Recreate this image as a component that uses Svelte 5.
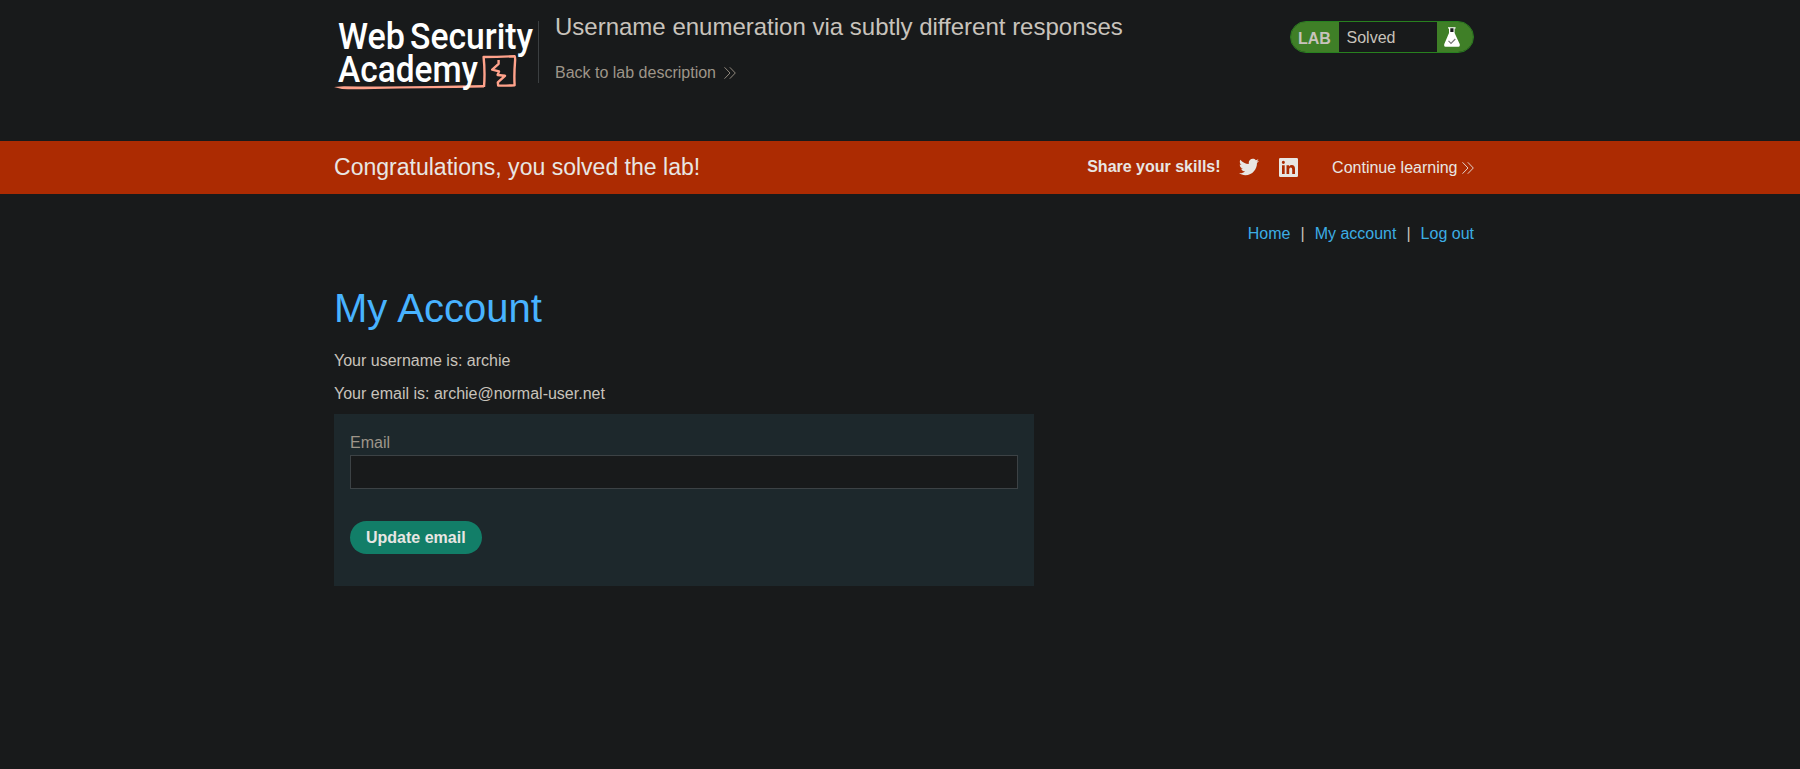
<script>
  const links = ['Home', 'My account', 'Log out'];
  let email = $state('');
</script>

{#snippet chevrons()}
  <svg class="chevrons" viewBox="0 0 12 12" width="12" height="12" aria-hidden="true">
    <path d="M0.5 0.3 L6 6 L0.5 11.7 M5.8 0.3 L11.3 6 L5.8 11.7" />
  </svg>
{/snippet}

<div class="page">
  <header class="container header">
    <svg class="logo" viewBox="0 0 204 82" width="204" height="82" role="img" aria-label="Web Security Academy">
      <path class="ink" d="M150 77 Q151.2 62 149.6 47 Q165 46.8 180.6 46.2 Q181.4 47 181 52 Q180 64 180.6 75.2 Q172 75.8 164.2 75.6 L163.8 72.4 L171 65.8 L163.6 65 L165 61.3 L158.2 59.6 L164.6 53.8 V50" />
      <path class="tail" d="M0 77 L10 76.2 Q24 76.4 40 76.4 Q90 76.6 150 75 V77.6 Q90 78.4 40 79 Q18 79.6 8 79 Z" />
      <text x="4" y="39.2" textLength="67" lengthAdjust="spacingAndGlyphs">Web</text>
      <text x="76" y="39.2" textLength="123" lengthAdjust="spacingAndGlyphs">Security</text>
      <text x="4" y="71.8" textLength="140" lengthAdjust="spacingAndGlyphs">Academy</text>
    </svg>
    <div class="heading">
      <h2>Username enumeration via subtly different responses</h2>
      <a class="back" href="#lab">Back to lab description {@render chevrons()}</a>
    </div>
    <div class="status">
      <span class="tag">LAB</span>
      <span class="state">Solved</span>
      <span class="flask">
        <svg viewBox="0 0 18 22" width="18" height="22" aria-hidden="true">
          <path fill="#fff" d="M5 1.2 H12.6 V2.6 H11.6 V7 L16.8 18.2 Q17.2 20.7 15.5 20.8 H2.5 Q0.6 20.7 1.2 18.2 L6 7 V2.6 H5 Z" />
          <path fill="#181a1b" d="M7.3 2.2 H10.5 V6 H7.3 Z" />
          <path fill="none" stroke="#777" stroke-width="1.2" d="M5.5 14.8 L8 17.3 L12.3 13" />
        </svg>
      </span>
    </div>
  </header>

  <section class="banner">
    <div class="container banner-row">
      <h4>Congratulations, you solved the lab!</h4>
      <div class="share">
        <strong>Share your skills!</strong>
        <svg class="twitter" viewBox="0 0 24 24" width="20" height="20" aria-hidden="true">
          <path d="M23.954 4.569c-.885.389-1.83.654-2.825.775 1.014-.611 1.794-1.574 2.163-2.723-.951.555-2.005.959-3.127 1.184-.896-.959-2.173-1.559-3.591-1.559-2.717 0-4.92 2.203-4.92 4.917 0 .39.045.765.127 1.124C7.691 8.094 4.066 6.13 1.64 3.161c-.427.722-.666 1.561-.666 2.475 0 1.71.87 3.213 2.188 4.096-.807-.026-1.566-.248-2.228-.616v.061c0 2.385 1.693 4.374 3.946 4.827-.413.111-.849.171-1.296.171-.314 0-.615-.03-.916-.086.631 1.953 2.445 3.377 4.604 3.417-1.68 1.319-3.809 2.105-6.102 2.105-.39 0-.779-.023-1.17-.067 2.189 1.394 4.768 2.209 7.557 2.209 9.054 0 13.999-7.496 13.999-13.986 0-.209 0-.42-.015-.63.961-.689 1.8-1.56 2.46-2.548l-.047-.02z" />
        </svg>
        <svg class="linkedin" viewBox="0 0 19 19" width="19" height="19" aria-hidden="true">
          <path fill-rule="evenodd" d="M1.3 0 H17.7 Q19 0 19 1.3 V17.7 Q19 19 17.7 19 H1.3 Q0 19 0 17.7 V1.3 Q0 0 1.3 0 Z M3 7.2 V16 H5.7 V7.2 Z M4.35 2.8 A1.55 1.55 0 1 0 4.35 5.9 A1.55 1.55 0 1 0 4.35 2.8 Z M7.5 7.2 V16 H10.2 V11.5 Q10.3 9.4 11.8 9.4 Q13.2 9.4 13.2 11.5 V16 H16 V11 Q16 7 12.8 7 Q11 7 10.1 8.4 V7.2 Z" />
        </svg>
        <a class="continue" href="#learn">Continue learning {@render chevrons()}</a>
      </div>
    </div>
  </section>

  <main class="container">
    <nav>
      {#each links as link, i}
        {#if i > 0}<span>|</span>{/if}
        <a href="#top">{link}</a>
      {/each}
    </nav>
    <h1>My Account</h1>
    <p>Your username is: archie</p>
    <p>Your email is: archie@normal-user.net</p>
    <form onsubmit={(e) => e.preventDefault()}>
      <label for="email">Email</label>
      <input id="email" type="email" bind:value={email} />
      <button type="submit">Update email</button>
    </form>
  </main>
</div>

<style>
  :global(body) {
    margin: 0;
    background: #181a1b;
  }
  .page {
    box-sizing: border-box;
    min-height: 769px;
    padding-left: 0;
    background: #181a1b;
    color: #c8c3bc;
    font: 16px/20px "Liberation Sans", Arial, sans-serif;
  }
  h1, h2, h4, p {
    margin: 0;
    font-weight: 400;
  }
  a {
    color: inherit;
    text-decoration: none;
  }
  .container {
    box-sizing: border-box;
    width: 1148px;
    margin: 0 auto;
    padding-left: 8px;
  }
  .chevrons {
    fill: none;
    stroke: currentColor;
    stroke-width: 0.9;
  }
  .header {
    display: flex;
    height: 141px;
    align-items: flex-start;
  }
  .logo {
    margin-top: 10px;
    overflow: visible;
  }
  .logo text {
    fill: #fff;
    font: 500 37px Roboto, sans-serif;
  }
  .ink {
    fill: none;
    stroke: #ffa28b;
    stroke-width: 2.4;
    stroke-linejoin: round;
  }
  .tail {
    fill: #ffa28b;
  }
  .heading {
    flex: 1;
    height: 62px;
    margin-top: 21px;
    padding-left: 16px;
    border-left: 1px solid #3b3f41;
  }
  h2 {
    margin-top: -9px;
    font-size: 24px;
    line-height: 30px;
  }
  .back {
    display: flex;
    align-items: center;
    gap: 8px;
    margin-top: 21px;
    color: #9e9589;
  }
  .status {
    display: flex;
    box-sizing: border-box;
    width: 184px;
    height: 32px;
    margin-top: 21px;
    border: 1px solid #28811f;
    border-radius: 16px;
    overflow: hidden;
    line-height: 33px;
  }
  .tag {
    box-sizing: border-box;
    width: 48px;
    padding-left: 7px;
    background: #3f7f27;
    font-weight: 700;
  }
  .state {
    flex: 1;
    padding-left: 7.5px;
    line-height: 31px;
  }
  .flask {
    width: 36px;
    background: #3f7f27;
  }
  .flask svg {
    display: block;
    margin: 4px 0 0 6px;
  }
  .banner {
    height: 53px;
    background: #ac2b02;
    color: #e8e6e3;
  }
  .banner-row {
    display: flex;
    height: 51px;
    align-items: center;
    justify-content: space-between;
  }
  h4 {
    font-size: 23.04px;
    line-height: 28px;
  }
  .share {
    display: flex;
    align-items: center;
    fill: #e8e6e3;
  }
  .twitter {
    margin: 1px 0 0 18.5px;
  }
  .linkedin {
    margin: 2px 0 0 20px;
  }
  .continue {
    display: flex;
    align-items: center;
    gap: 4.5px;
    margin: 2px 0 0 34px;
  }
  nav {
    display: flex;
    justify-content: flex-end;
    gap: 10px;
    padding-top: 30px;
  }
  nav a {
    color: #3cade4;
  }
  h1 {
    margin-top: 40px;
    color: #48b3ff;
    font-size: 40px;
    line-height: 48px;
    word-spacing: 1px;
  }
  p {
    margin-top: 13px;
  }
  h1 + p {
    margin-top: 19px;
  }
  form {
    display: flex;
    box-sizing: border-box;
    width: 700px;
    height: 172px;
    margin-top: 10px;
    padding: 19px 16px 32px;
    flex-direction: column;
    align-items: flex-start;
    background: #1d282c;
  }
  label {
    color: #9e9589;
  }
  input {
    box-sizing: border-box;
    width: 100%;
    height: 34px;
    margin-top: 2px;
    padding: 0 8px;
    border: 1px solid #3c4245;
    border-radius: 0;
    outline: none;
    background: #181a1b;
    color: inherit;
    font: inherit;
  }
  button {
    height: 33px;
    margin-top: 32px;
    padding: 0 16px;
    border: 0;
    border-radius: 17px;
    background: #127e68;
    color: #e8e6e3;
    font: 700 16px "Liberation Sans", Arial, sans-serif;
  }
</style>
